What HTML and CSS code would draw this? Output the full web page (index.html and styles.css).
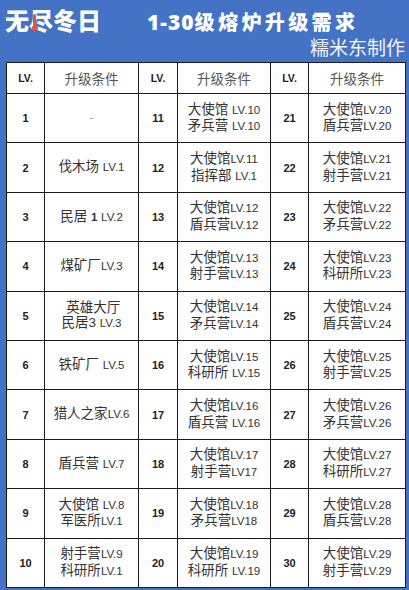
FILE: index.html
```html
<!DOCTYPE html>
<html lang="zh">
<head>
<meta charset="utf-8">
<link rel="stylesheet" href="styles.css">
</head>
<body>
<div class="page">
  <header class="top">
    <div class="titlebar">
      <div class="logo">无<span class="jin">尽<i class="thermo"></i></span>冬日</div>
      <h1 class="title"><span class="num">1-30</span>级熔炉升级需求</h1>
    </div>
    <div class="author">糯米东制作</div>
  </header>
  <table class="grid">
    <colgroup>
      <col class="c-lv"><col class="c-req1"><col class="c-lv2"><col class="c-req2"><col class="c-lv"><col class="c-req3">
    </colgroup>
    <thead>
      <tr><th class="lvh">LV.</th><th class="reqh">升级条件</th><th class="lvh">LV.</th><th class="reqh">升级条件</th><th class="lvh">LV.</th><th class="reqh">升级条件</th></tr>
    </thead>
    <tbody>
      <tr><td class="n">1</td><td class="r dash">-</td><td class="n">11</td><td class="r">大使馆 <span class="lv">LV.10</span><br>矛兵营 <span class="lv">LV.10</span></td><td class="n">21</td><td class="r">大使馆<span class="lv">LV.20</span><br>盾兵营<span class="lv">LV.20</span></td></tr>
      <tr><td class="n">2</td><td class="r">伐木场 <span class="lv">LV.1</span></td><td class="n">12</td><td class="r">大使馆<span class="lv">LV.11</span><br>指挥部 <span class="lv">LV.1</span></td><td class="n">22</td><td class="r">大使馆<span class="lv">LV.21</span><br>射手营<span class="lv">LV.21</span></td></tr>
      <tr><td class="n">3</td><td class="r">民居 <b class="one">1</b> <span class="lv">LV.2</span></td><td class="n">13</td><td class="r">大使馆<span class="lv">LV.12</span><br>盾兵营<span class="lv">LV.12</span></td><td class="n">23</td><td class="r">大使馆<span class="lv">LV.22</span><br>矛兵营<span class="lv">LV.22</span></td></tr>
      <tr><td class="n">4</td><td class="r">煤矿厂<span class="lv">LV.3</span></td><td class="n">14</td><td class="r">大使馆<span class="lv">LV.13</span><br>射手营<span class="lv">LV.13</span></td><td class="n">24</td><td class="r">大使馆<span class="lv">LV.23</span><br>科研所<span class="lv">LV.23</span></td></tr>
      <tr><td class="n">5</td><td class="r">&nbsp;英雄大厅<br>民居3 <span class="lv">LV.3</span></td><td class="n">15</td><td class="r">大使馆<span class="lv">LV.14</span><br>矛兵营<span class="lv">LV.14</span></td><td class="n">25</td><td class="r">大使馆<span class="lv">LV.24</span><br>盾兵营<span class="lv">LV.24</span></td></tr>
      <tr><td class="n">6</td><td class="r">铁矿厂 <span class="lv">LV.5</span></td><td class="n">16</td><td class="r">大使馆<span class="lv">LV.15</span><br>科研所 <span class="lv">LV.15</span></td><td class="n">26</td><td class="r">大使馆<span class="lv">LV.25</span><br>射手营<span class="lv">LV.25</span></td></tr>
      <tr><td class="n">7</td><td class="r">猎人之家<span class="lv">LV.6</span></td><td class="n">17</td><td class="r">大使馆<span class="lv">LV.16</span><br>盾兵营 <span class="lv">LV.16</span></td><td class="n">27</td><td class="r">大使馆<span class="lv">LV.26</span><br>矛兵营<span class="lv">LV.26</span></td></tr>
      <tr><td class="n">8</td><td class="r">盾兵营 <span class="lv">LV.7</span></td><td class="n">18</td><td class="r">大使馆<span class="lv">LV.17</span><br>射手营<span class="lv">LV17</span></td><td class="n">28</td><td class="r">大使馆<span class="lv">LV.27</span><br>科研所<span class="lv">LV.27</span></td></tr>
      <tr><td class="n">9</td><td class="r">大使馆 <span class="lv">LV.8</span><br>军医所<span class="lv">LV.1</span></td><td class="n">19</td><td class="r">大使馆<span class="lv">LV.18</span><br>矛兵营<span class="lv">LV18</span></td><td class="n">29</td><td class="r">大使馆<span class="lv">LV.28</span><br>盾兵营<span class="lv">LV.28</span></td></tr>
      <tr><td class="n">10</td><td class="r">射手营<span class="lv">LV.9</span><br>科研所<span class="lv">LV.1</span></td><td class="n">20</td><td class="r">大使馆<span class="lv">LV.19</span><br>科研所 <span class="lv">LV.19</span></td><td class="n">30</td><td class="r">大使馆<span class="lv">LV.29</span><br>射手营<span class="lv">LV.29</span></td></tr>
    </tbody>
  </table>
</div>
</body>
</html>
```

FILE: styles.css
```css
* { box-sizing: border-box; }
html, body { margin: 0; padding: 0; }
body {
  background: #4472c4;
  width: 409px;
  height: 590px;
  overflow: hidden;
  font-family: "Noto Sans CJK SC", "Liberation Sans", sans-serif;
}
.page {
  width: 409px;
  height: 590px;
  background: #4472c4;
}
.top {
  height: 62px;
  color: #fff;
}
.titlebar {
  display: flex;
  align-items: center;
  height: 36px;
  padding-top: 4px;
  padding-left: 5px;
}
.logo {
  width: 142px;
  font-family: "Noto Sans CJK SC", sans-serif;
  font-weight: 900;
  font-size: 24px;
  line-height: 28px;
  white-space: nowrap;
}
.jin {
  position: relative;
  display: inline-block;
}
.thermo {
  position: absolute;
  left: 4px;
  top: 8px;
  width: 3px;
  height: 14px;
  background: #e5513e;
  border-radius: 1.5px;
}
.thermo::after {
  content: "";
  position: absolute;
  left: -1.5px;
  bottom: -3px;
  width: 6px;
  height: 6px;
  border-radius: 50%;
  background: #e5513e;
}
.title {
  margin: 0;
  font-family: "Noto Sans CJK SC", sans-serif;
  font-weight: 900;
  font-size: 20px;
  line-height: 28px;
  letter-spacing: 3.4px;
  white-space: nowrap;
  padding-top: 3px;
}
.num {
  font-family: "Noto Sans", "Liberation Sans", sans-serif;
  font-weight: 900;
  font-size: 21px;
  letter-spacing: 1px;
}
.author {
  text-align: right;
  padding-right: 4px;
  font-size: 19px;
  line-height: 22px;
  color: #f4f6fb;
  font-weight: 400;
}
.grid {
  margin-left: 6px;
  border-collapse: collapse;
  table-layout: fixed;
  width: 399px;
  background: #fff;
}
.c-lv { width: 38px; }
.c-lv2 { width: 39px; }
.c-req1 { width: 94px; }
.c-req2 { width: 93px; }
.c-req3 { width: 97px; }
.grid th, .grid td {
  border: 1px solid #1a1a1a;
  padding: 0;
  text-align: center;
  vertical-align: middle;
}
.grid thead tr { height: 31px; }
.grid tbody tr { height: 49.4px; }
.lvh {
  font-family: "Liberation Sans", sans-serif;
  font-weight: 700;
  font-size: 10.5px;
  color: #222;
}
.reqh {
  font-family: "Liberation Sans", "Noto Sans CJK SC", sans-serif;
  font-weight: 400;
  font-size: 13.5px;
  color: #555;
}
.n {
  font-family: "Liberation Sans", sans-serif;
  font-weight: 700;
  font-size: 11px;
  color: #222;
}
.r {
  font-family: "Liberation Sans", "Noto Sans CJK SC", sans-serif;
  font-size: 13.5px;
  line-height: 15.5px;
  color: #333;
  white-space: nowrap;
}
.lv {
  font-family: "Liberation Sans", sans-serif;
  font-size: 11.5px;
  color: #333;
}
.one {
  font-family: "Liberation Sans", sans-serif;
  font-size: 11.5px;
  font-weight: 700;
}
.dash { color: #888; font-size: 11px; }
```
